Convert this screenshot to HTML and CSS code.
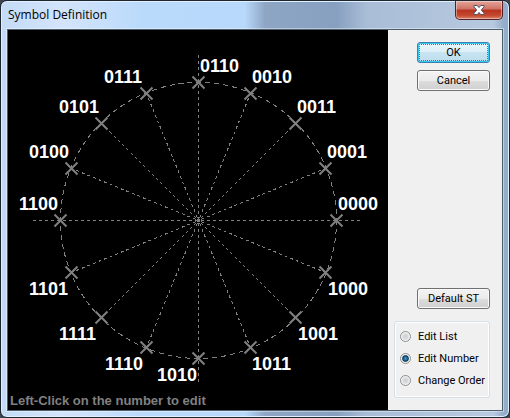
FILE: index.html
```
<!DOCTYPE html>
<html lang="en">
<head>
    <meta charset="UTF-8">
    <meta name="viewport" content="width=device-width, initial-scale=1.0">
    <title>Symbol Definition</title>
    <link rel="stylesheet" href="styles.css">
</head>
<body>
    <div class="window">
        <header class="titlebar">
            <h1>Symbol Definition</h1>
            <button type="button" class="close" aria-label="Close">
                <svg width="12" height="10" viewBox="0 0 12 10">
                    <path d="M1 .5h3.3L6 2.6 7.700 .5H11v1.300L8.300 5 11 8.200v1.300H7.700L6 7.400 4.300 9.500H1V8.200L3.700 5 1 1.800z" fill="#fff" stroke="#4f5666"/>
                </svg>
            </button>
        </header>

        <form class="client">
            <svg class="plot" viewBox="0 0 380 380">
                <g class="grid">
                    <line x1="25" y1="190.5" x2="353" y2="190.5"/>
                    <line x1="190.5" y1="25" x2="190.5" y2="353"/>
                    <circle cx="190.5" cy="190.5" r="138"/>
                </g>
                <g id="points"></g>
                <rect class="origin" x="189" y="189" width="3" height="3"/>
                <text class="hint" x="2" y="375">Left-Click on the number to edit</text>
            </svg>

            <div class="side">
                <div class="buttons">
                    <button type="submit" class="btn default">OK</button>
                    <button type="button" class="btn">Cancel</button>
                </div>
                <button type="button" class="btn">Default ST</button>
                <fieldset class="modes">
                    <label><input type="radio" name="mode" value="list">Edit List</label>
                    <label><input type="radio" name="mode" value="number" checked>Edit Number</label>
                    <label><input type="radio" name="mode" value="order">Change Order</label>
                </fieldset>
            </div>
        </form>
    </div>

    <script src="plot.js"></script>
</body>
</html>
```

FILE: plot.js
```
// symbols counter-clockwise from 0 degrees, with the start of each label
const symbols = [
    ['0000', 330, 180],
    ['0001', 319, 128],
    ['0011', 289, 83],
    ['0010', 244, 53],
    ['0110', 192, 42],
    ['0111', 96, 53],
    ['0101', 51, 83],
    ['0100', 21, 128],
    ['1100', 11, 180],
    ['1101', 21, 265],
    ['1111', 51, 310],
    ['1110', 97, 340],
    ['1010', 149, 351],
    ['1011', 244, 340],
    ['1001', 290, 310],
    ['1000', 320, 265]
];

const center = 190.5;
const radius = 138;
let markup = '';

symbols.forEach(([code, labelX, labelY], i) => {
    const angle = i * Math.PI / 8;
    const x = center + Math.trunc(radius * Math.cos(angle));
    const y = center - Math.trunc(radius * Math.sin(angle));

    if (i % 4 !== 0) {
        markup += `<line class="spoke" x1="${center}" y1="${center}" x2="${x}" y2="${y}"/>`;
    }
    markup += `<path class="mark" d="M${x - 6} ${y - 6}l12 12m0 -12l-12 12"/>`;
    markup += `<text class="code" x="${labelX}" y="${labelY}">${code}</text>`;
});

document.getElementById('points').innerHTML = markup;
```

FILE: styles.css
```
* {
    box-sizing: border-box;
}
body {
    margin: 0;
    background-color: #3c4450;
    font-family: Roboto, "Liberation Sans", sans-serif;
    font-size: 11px;
    color: #000;
}
.window {
    min-height: 100vh;
    padding: 0 6px 6px;
    border: 1px solid #1e2630;
    border-radius: 7px;
    background: linear-gradient(90deg, #c3dbf7 0%, #d3e4fa 12%, #badafb 28%, #b8d9fb 48%, #8ea6c4 52%, #87a0c0 66%, #a9bdd7 72%, #b6c9df 97%, #93adc9 99%);
    box-shadow: inset 0 0 0 1px #e2effc;
}
.titlebar {
    display: flex;
    justify-content: space-between;
    align-items: flex-start;
    height: 28px;
}
h1 {
    margin: 0;
    padding-left: 1px;
    font-family: "Open Sans", "Noto Sans", sans-serif;
    font-size: 12px;
    font-weight: normal;
    line-height: 28px;
}
.close {
    display: flex;
    justify-content: center;
    align-items: center;
    width: 48px;
    height: 19px;
    padding: 0;
    border: 1px solid #55202a;
    border-top: none;
    border-radius: 0 0 5px 5px;
    background: linear-gradient(#e3a599, #cf7263 45%, #b8331f 50%, #c4492f 80%, #dc8468);
    box-shadow: inset 0 0 0 1px rgba(255,255,255,0.4);
}
.client {
    display: flex;
    border: 1px solid #4d5e6c;
    background-color: #f0f0f0;
    box-shadow: 0 0 0 1px rgba(255,255,255,0.4);
}
.plot {
    display: block;
    flex: 1;
    min-width: 0;
    background-color: #000;
}
.grid, .spoke {
    fill: none;
    stroke: #808080;
    stroke-width: 1;
    stroke-dasharray: 3 3;
    shape-rendering: crispEdges;
}
.grid circle {
    stroke-dasharray: 5 4;
}
.spoke {
    stroke-dashoffset: 3;
}
.origin {
    fill: #808080;
}
.mark {
    fill: none;
    stroke: #808080;
    stroke-width: 2;
}
.code {
    font: bold 18px "Liberation Sans", Arial, sans-serif;
    fill: #fff;
}
.hint {
    font: bold 13px "Liberation Sans", Arial, sans-serif;
    fill: #808080;
}
.side {
    display: flex;
    flex-direction: column;
    align-items: flex-end;
    width: 114px;
    padding: 12px 12px 12px 0;
}
.buttons {
    display: flex;
    flex-direction: column;
    gap: 7px;
    margin-bottom: auto;
}
.btn {
    width: 73px;
    height: 21px;
    padding: 0;
    border: 1px solid #707070;
    border-radius: 3px;
    background: linear-gradient(#f3f3f3, #ebebeb 50%, #dddddd 50%, #cfcfcf);
    box-shadow: inset 0 0 0 1px #fafafa;
    font: inherit;
    color: inherit;
}
.default {
    border-color: #3c7fb1;
    background: linear-gradient(#eaf5fb, #dceef7 50%, #c8e4f2 50%, #bddcec);
    box-shadow: inset 0 0 0 1px #35c8f0;
    outline: 1px dotted #b0583a;
    outline-offset: -3px;
}
.modes {
    display: flex;
    flex-direction: column;
    gap: 6px;
    width: 96px;
    margin: 12px 0 0;
    padding: 6px 4px 9px 5px;
    border: 1px solid #d5dfe5;
    border-radius: 3px;
    box-shadow: inset 0 0 0 1px #fff;
}
.modes label {
    display: flex;
    align-items: center;
    gap: 7px;
    height: 16px;
    white-space: nowrap;
}
.modes input {
    appearance: none;
    flex: none;
    width: 11px;
    height: 11px;
    margin: 0;
    border: 1px solid #8e8f8f;
    border-radius: 50%;
    background: radial-gradient(#d2d6da 30%, #f4f4f4 70%);
}
.modes input:checked {
    background: radial-gradient(#3fa8dc 0, #0e3a5c 45%, #f4f4f4 60%);
}
```
